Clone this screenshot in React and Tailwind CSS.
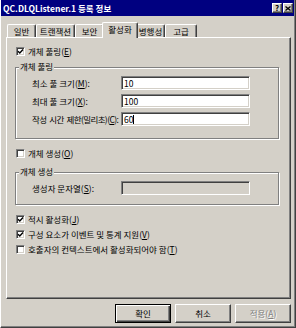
import React from "react";

const Check = ({ checked }) => (
  <span className="w-[9px] h-[9px] shrink-0 bg-white border border-t-[#808080] border-l-[#808080] border-r-white border-b-white shadow-[inset_1px_1px_0_#404040,inset_-1px_-1px_0_#d4d0c8] flex items-center justify-center">
    {checked && (
      <svg width="7" height="7" viewBox="0 0 7 7">
        <path d="M1 3.2 L2.8 5 L6 1.5" fill="none" stroke="#000" strokeWidth="1.4" />
      </svg>
    )}
  </span>
);

const CheckRow = ({ checked, children, className = "" }) => (
  <div className={`h-[14px] ml-[9px] flex items-center gap-[3px] ${className}`}>
    <Check checked={checked} />
    <span className="leading-none whitespace-nowrap">{children}</span>
  </div>
);

const Field = ({ value, disabled, caret }) => (
  <div
    className={`w-[129px] h-[14px] shrink-0 border border-t-[#808080] border-l-[#808080] border-r-white border-b-white shadow-[inset_1px_1px_0_#404040,inset_-1px_-1px_0_#d4d0c8] pl-[2px] flex items-center leading-none ${
      disabled ? "bg-[#d4d0c8]" : "bg-white"
    }`}
  >
    {value}
    {caret && <span className="w-[1px] h-[9px] bg-black" />}
  </div>
);

const FieldRow = ({ label, value, caret, tight }) => (
  <div className="h-[14px] flex items-center">
    <span
      className={`w-[105px] shrink-0 pl-[16px] leading-none whitespace-nowrap ${
        tight ? "tracking-[-0.6px] [word-spacing:1.5px]" : ""
      }`}
    >
      {label}
    </span>
    <Field value={value} caret={caret} />
  </div>
);

const Group = ({ title, className = "", children }) => (
  <div
    className={`relative ml-[8px] w-[264px] border border-[#808080] shadow-[1px_1px_0_#fff,inset_1px_1px_0_#fff] ${className}`}
  >
    <span className="absolute left-[3px] top-[-7px] px-[1px] bg-[#d4d0c8] leading-[10px]">{title}</span>
    {children}
  </div>
);

const Button = ({ children, primary, disabled }) => (
  <div
    className={`w-[56px] h-[19px] flex items-center justify-center leading-none ${
      primary
        ? "border border-black shadow-[inset_1px_1px_0_#fff,inset_-1px_-1px_0_#404040,inset_-2px_-2px_0_#808080]"
        : "border border-t-white border-l-white border-r-[#404040] border-b-[#404040] shadow-[inset_-1px_-1px_0_#808080]"
    } ${disabled ? "text-[#808080] [text-shadow:1px_1px_0_#fff]" : ""}`}
  >
    {children}
  </div>
);

const TitleButton = ({ children }) => (
  <span className="w-[10px] h-[10px] bg-[#d4d0c8] border border-t-white border-l-white border-r-[#404040] border-b-[#404040] shadow-[inset_-1px_-1px_0_#808080] flex items-center justify-center text-black">
    {children}
  </span>
);

const tabs = [
  { label: "일반", w: "w-[29px]" },
  { label: "트랜잭션", w: "w-[39px]" },
  { label: "보안", w: "w-[29px]" },
  { label: "활성화", w: "w-[36px]", active: true },
  { label: "병행성", w: "w-[29px]" },
  { label: "고급", w: "w-[32px]" },
];

export default function App() {
  return (
    <div className="w-[296px] h-[328px] bg-[#d4d0c8] overflow-hidden text-black text-[8.5px] font-['Noto_Sans_CJK_KR','Noto_Sans_CJK_SC',sans-serif]">
      <div className="h-full flex flex-col border-l border-l-white border-r border-r-[#404040] border-b border-b-[#404040] shadow-[inset_-1px_-1px_0_#808080]">
        {/* Title bar */}
        <div className="h-[16px] mr-[1px] bg-[#000080] flex items-center pl-[2px] pr-[1px]">
          <span className="text-white font-bold text-[8.5px] leading-none whitespace-nowrap">
            QC.DLQListener.1 등록 정보
          </span>
          <div className="ml-auto flex gap-[1px]">
            <TitleButton>
              <span className="text-[8px] font-bold leading-none">?</span>
            </TitleButton>
            <TitleButton>
              <svg width="6" height="5" viewBox="0 0 6 5">
                <path d="M0.5 0.5 L5.5 4.5 M5.5 0.5 L0.5 4.5" stroke="#000" strokeWidth="1.3" />
              </svg>
            </TitleButton>
          </div>
        </div>

        {/* Tabs */}
        <div className="mt-[6px] h-[15px] flex items-end pl-[6px]">
          {tabs.map((t) =>
            t.active ? (
              <div
                key={t.label}
                className={`${t.w} -ml-[2px] -mr-[2px] h-[16px] -mb-[1px] relative z-10 bg-[#d4d0c8] border-t border-l border-t-white border-l-white border-r border-r-[#404040] shadow-[inset_-1px_0_0_#808080] rounded-t-[2px] flex items-start justify-center pt-[2px] leading-none`}
              >
                {t.label}
              </div>
            ) : (
              <div
                key={t.label}
                className={`${t.w} h-[13px] border-t border-l border-t-white border-l-white border-r border-r-[#404040] shadow-[inset_-1px_0_0_#808080] rounded-t-[2px] flex items-center justify-center leading-none whitespace-nowrap`}
              >
                {t.label}
              </div>
            )
          )}
        </div>

        {/* Tab page */}
        <div className="ml-[5px] w-[285px] h-[262px] border border-t-white border-l-white border-r-[#404040] border-b-[#404040] shadow-[inset_-1px_-1px_0_#808080] flex flex-col">
          <CheckRow checked className="mt-[6px]">
            개체 풀링(<u>E</u>)
          </CheckRow>

          <Group title="개체 풀링" className="mt-[9px] h-[72px]">
            <div className="pt-[8px] flex flex-col gap-[4px]">
              <FieldRow label={<>최소 풀 크기(<u>M</u>):</>} value="10" />
              <FieldRow label={<>최대 풀 크기(<u>X</u>):</>} value="100" />
              <FieldRow label={<>작성 시간 제한(밀리초)(<u>C</u>):</>} value="60" caret tight />
            </div>
          </Group>

          <CheckRow className="mt-[7px]">
            개체 생성(<u>O</u>)
          </CheckRow>

          <Group title="개체 생성" className="mt-[12px] h-[33px]">
            <div className="pt-[8px] h-[14px] flex items-center box-content">
              <span className="w-[105px] shrink-0 pl-[16px] leading-none whitespace-nowrap">
                생성자 문자열(<u>S</u>):
              </span>
              <Field value="" disabled />
            </div>
          </Group>

          <CheckRow checked className="mt-[7px]">
            적시 활성화(<u>J</u>)
          </CheckRow>
          <CheckRow checked className="mt-[1px]">
            구성 요소가 이벤트 및 통계 지원(<u>V</u>)
          </CheckRow>
          <CheckRow className="mt-[1px]">
            호출자의 컨텍스트에서 활성화되어야 함(<u>T</u>)
          </CheckRow>
        </div>

        {/* Buttons */}
        <div className="mt-[5px] ml-[5px] w-[285px] flex justify-end gap-[4px]">
          <Button primary>확인</Button>
          <Button>취소</Button>
          <Button disabled>
            적용(<u>A</u>)
          </Button>
        </div>
      </div>
    </div>
  );
}
